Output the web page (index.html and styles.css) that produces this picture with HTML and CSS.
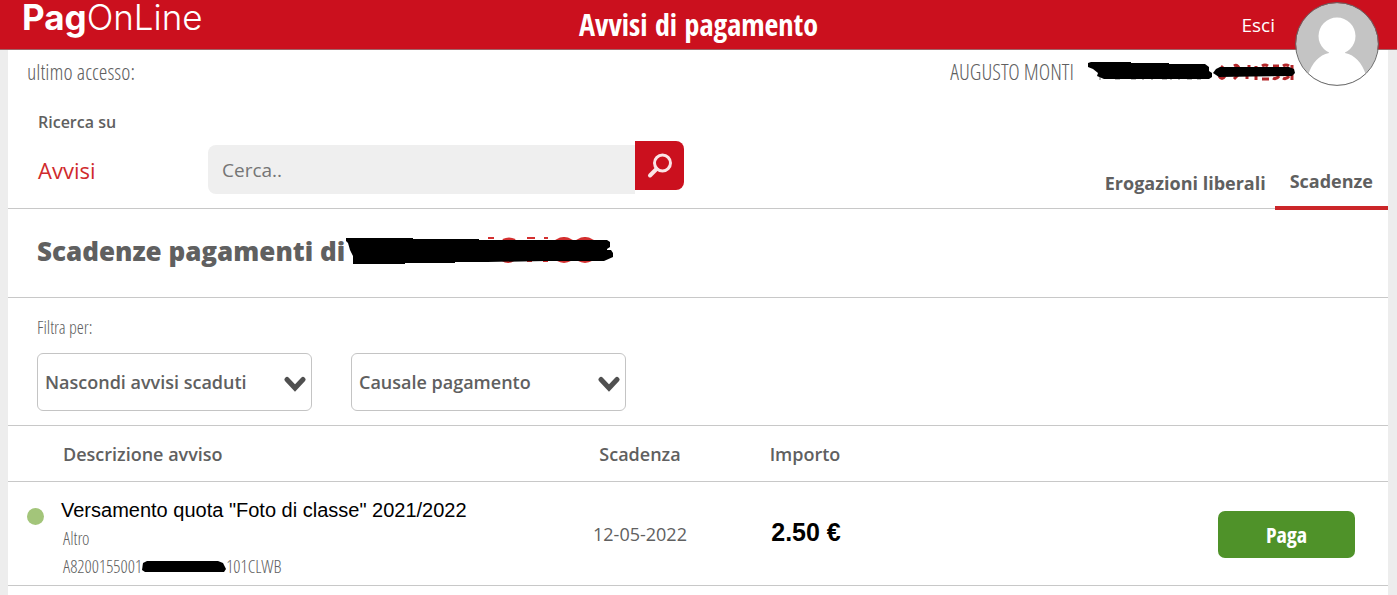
FILE: index.html
```
<!DOCTYPE html>
<html lang="it">
<head>
<meta charset="utf-8">
<title>PagOnLine - Avvisi di pagamento</title>
<link rel="stylesheet" href="styles.css">
</head>
<body>
<header class="topbar">
  <a class="logo" href="#"><b>Pag</b>OnLine</a>
  <h1 class="page-name">Avvisi di pagamento</h1>
  <a class="logout" href="#">Esci</a>
  <svg class="avatar" viewBox="0 0 84 84" role="img" aria-label="Profilo">
    <defs><clipPath id="disc"><circle cx="42" cy="42" r="41"/></clipPath></defs>
    <circle cx="42" cy="42" r="41" fill="#c4c4c4"/>
    <g clip-path="url(#disc)" fill="#fff">
      <ellipse cx="42" cy="34" rx="18.500" ry="18.500"/>
      <path d="M34 45h16v6c10 2 17 10 21 22v12H13V73c4-12 11-20 21-22z"/>
    </g>
    <circle cx="42" cy="42" r="41.400" fill="none" stroke="#666" stroke-width="1"/>
  </svg>
</header>
<main class="sheet">
  <div class="account">
    <span>ultimo accesso:</span>
    <span class="account-user">
      <span>AUGUSTO MONTI</span>
      <svg width="208" height="28" viewBox="0 0 208 28" aria-hidden="true">
        <path d="M12 20v3M27 22h5M43 22h5M55 20v3M64 20v3M74 22h5M83 20v3M91 20v3M99 22h5M109 22h4" stroke="#777" fill="none"/>
        <path d="M135 9l-4 5M131 19q3 5 6 0M146 9q3-2 5 2M146 22l4-4M161 8v4M159 18v4M168 9v4M168 18v5M174 9q3-2 6 0M174 22h7M185 9h6M185 21q3 2 6-2M195 9q3-2 6 0M195 21q3 2 6-2M204 8v15" stroke="#b3272a" stroke-width="3" fill="none"/>
        <path d="M3 5h40v1h38v1h36l4 3v4l3 2v4l-3 2H16l-7-3 1-3-5-4-5-2V6z"/>
        <path d="M128 12l4-2h69l5 2 1 4-3 3-73 1-6-4z"/>
      </svg>
    </span>
  </div>

  <div class="tools">
    <form class="search">
      <label class="search-label" for="q">Ricerca su</label>
      <span class="search-scope">Avvisi</span>
      <div class="search-box">
        <input id="q" class="search-input" type="text" placeholder="Cerca..">
        <button class="search-button" type="button" aria-label="Cerca">
          <svg width="26" height="26" viewBox="0 0 26 26" fill="none" stroke="#fbe4e6">
            <circle cx="15.500" cy="10" r="8" stroke-width="3"/>
            <path d="M9.500 16L3 22.500" stroke-width="4" stroke-linecap="round"/>
          </svg>
        </button>
      </div>
    </form>
    <nav class="tabs">
      <a class="tab" href="#">Erogazioni liberali</a>
      <a class="tab tab-active" href="#">Scadenze</a>
    </nav>
  </div>

  <h2 class="title">Scadenze pagamenti di
    <svg width="268" height="28" viewBox="0 0 268 28" aria-hidden="true">
      <path d="M143 1h6M158 3q6-3 12 0zM182 1h8M199 1h4M212 3q7-4 14 0zM233 3q7-4 14 0zM157 23q6 4 12 0zM182 24h5M198 24h5M212 23q7 4 14 0zM233 23q7 4 14 0z" stroke="#d32f2f" stroke-width="2" fill="#d32f2f"/>
      <path d="M1 1h67v1h66v1h128l3 2v5l-3 2v1h4l2 3v4l-9 4h-57l-60 1H110v1H60v1H8v-8l-3-6-2-7-2-2z"/>
    </svg>
  </h2>

  <section class="filters">
    <span class="filters-label">Filtra per:</span>
    <div class="filters-row">
      <div class="picker">
        <select class="picker-select" aria-label="Avvisi scaduti"><option>Nascondi avvisi scaduti</option></select>
        <svg class="picker-arrow" viewBox="0 0 22 16"><path d="M3 3.500l8 8.500 8-8.500" fill="none" stroke="#505050" stroke-width="5" stroke-linecap="round"/></svg>
      </div>
      <div class="picker">
        <select class="picker-select" aria-label="Causale"><option>Causale pagamento</option></select>
        <svg class="picker-arrow" viewBox="0 0 22 16"><path d="M3 3.500l8 8.500 8-8.500" fill="none" stroke="#505050" stroke-width="5" stroke-linecap="round"/></svg>
      </div>
    </div>
  </section>

  <table class="notices">
    <colgroup><col class="col-text"><col class="col-date"><col class="col-amount"><col></colgroup>
    <thead>
      <tr><th class="head-text">Descrizione avviso</th><th>Scadenza</th><th>Importo</th><th></th></tr>
    </thead>
    <tbody>
      <tr>
        <td>
          <div class="notice">
            <span class="dot"></span>
            <div class="notice-body">
              <span class="notice-title">Versamento quota "Foto di classe" 2021/2022</span>
              <span class="notice-meta">Altro</span>
              <span class="notice-meta notice-code">A8200155001<svg width="84" height="14" viewBox="0 0 84 14" aria-hidden="true"><path d="M1 4l4-2h71l5 2 3 6-2 3H3l-3-2z"/></svg>101CLWB</span>
            </div>
          </div>
        </td>
        <td class="date">12-05-2022</td>
        <td class="amount">2.50 €</td>
        <td class="action"><button class="pay" type="button">Paga</button></td>
      </tr>
    </tbody>
  </table>
</main>
</body>
</html>
```
FILE: styles.css
```
* { box-sizing: border-box; }
body {
  margin: 0;
  background: #ededed;
  color: #606060;
  font-family: "Open Sans", "Noto Sans", sans-serif;
  font-size: 18px;
}
a { color: inherit; text-decoration: none; }
svg { flex: none; }

.topbar {
  position: relative;
  display: grid;
  grid-template-columns: 1fr auto 1fr;
  align-items: center;
  height: 50px;
  padding: 0 122px 0 22px;
  background: #cb101e;
  border-bottom: 1px solid #a06468;
  color: #fff;
}
.logo {
  align-self: start;
  font-family: Inter, sans-serif;
  font-size: 35px;
  font-weight: 300;
  line-height: 34px;
}
.logo b { font-weight: 700; }
.page-name {
  margin: 0 0 0 100px;
  font-family: "Open Sans Condensed", "Open Sans", sans-serif;
  font-size: 30px;
  font-weight: 700;
  line-height: 48px;
}
.logout { justify-self: end; font-size: 19px; }
.avatar { position: absolute; top: 2px; right: 18px; width: 84px; height: 84px; }

.sheet { min-height: calc(100vh - 50px); margin: 0 9px 0 8px; background: #fff; }

.account,
.filters-label,
.notice-meta {
  font-family: "Open Sans Condensed Light", "Open Sans Condensed", "Open Sans", sans-serif;
  font-weight: 300;
}
.account {
  display: flex;
  justify-content: space-between;
  padding: 7px 92px 1px 19px;
  font-size: 22px;
  line-height: 28px;
}
.account-user { display: flex; gap: 14px; }

.tools {
  display: flex;
  justify-content: space-between;
  align-items: flex-end;
  padding-left: 30px;
  border-bottom: 1px solid #c8c8c8;
}
.search {
  display: grid;
  grid-template-columns: 170px auto;
  align-items: center;
  padding: 24px 0 14px;
}
.search-label { grid-column: 1 / 3; font-size: 16px; font-weight: 600; line-height: 24px; margin-bottom: 7px; }
.search-scope { color: #d02a2c; font-size: 22px; font-weight: 500; padding-top: 4px; }
.search-box { display: flex; align-items: flex-start; }
.search-input {
  width: 427px;
  height: 49px;
  margin-top: 4px;
  padding: 0 14px;
  border: 0;
  border-radius: 8px 0 0 8px;
  background: #efefef;
  color: #606060;
  font: 19px "Open Sans", sans-serif;
}
.search-input::placeholder { color: #757575; }
.search-button {
  display: flex;
  align-items: center;
  justify-content: center;
  width: 49px;
  height: 49px;
  padding: 0;
  border: 0;
  border-radius: 0 8px 8px 0;
  background: #cb101e;
}
.tabs { display: flex; align-items: flex-end; margin-bottom: -2px; font-weight: 700; line-height: 24px; }
.tab { padding: 0 9px 15px; }
.tab-active { padding: 0 15px 13px; border-bottom: 4px solid #cb2629; }

.title {
  display: flex;
  align-items: center;
  height: 89px;
  margin: 0;
  padding: 0 29px 4px;
  border-bottom: 1px solid #c8c8c8;
  font-size: 26px;
  font-weight: 800;
}

.filters { padding: 17px 29px 14px; border-bottom: 1px solid #c8c8c8; }
.filters-label {
  display: block;
  margin-bottom: 14px;
  font-size: 18px;
  line-height: 24px;
}
.filters-row { display: flex; gap: 39px; }
.picker { position: relative; width: 275px; }
.picker-select {
  display: block;
  width: 100%;
  height: 58px;
  padding: 0 40px 0 7px;
  border: 1px solid #c4c4c4;
  border-radius: 6px;
  background: #fff;
  color: #606060;
  font: 600 18px "Open Sans", sans-serif;
  appearance: none;
}
.picker-arrow { position: absolute; top: 23px; right: 6px; width: 22px; height: 16px; pointer-events: none; }

.notices { width: 100%; border-collapse: collapse; table-layout: fixed; }
.notices th, .notices td { padding: 0; border-bottom: 1px solid #c8c8c8; text-align: center; }
.notices th { height: 55px; padding-top: 2px; font-weight: 600; }
.notices td { height: 104px; padding-top: 2px; }
.notices .head-text { padding-left: 55px; text-align: left; }
.col-text { width: 40%; }
.col-date { width: 160px; }
.col-amount { width: 170px; }
.notice { display: flex; gap: 17px; padding-left: 19px; text-align: left; }
.dot { flex: none; width: 17px; height: 17px; margin-top: 19px; border-radius: 50%; background: #a3c57a; }
.notice-body { display: flex; flex-direction: column; padding-top: 7px; }
.notice-title { color: #000; font: 20px/28px "Liberation Sans", Arial, sans-serif; }
.notice-meta { padding-left: 2px; font-size: 18px; line-height: 28px; }
.notice-code { display: flex; align-items: center; }
.date { font-weight: 500; }
.notices .amount { padding: 0 0 2px 2px; color: #000; font: 700 25px "Liberation Sans", Arial, sans-serif; }
.notices .action { padding-right: 33px; text-align: right; }
.pay {
  width: 137px;
  height: 47px;
  border: 0;
  border-radius: 7px;
  background: #4f9229;
  color: #fff;
  font: 700 22px "Open Sans Condensed", "Open Sans", sans-serif;
}
```
